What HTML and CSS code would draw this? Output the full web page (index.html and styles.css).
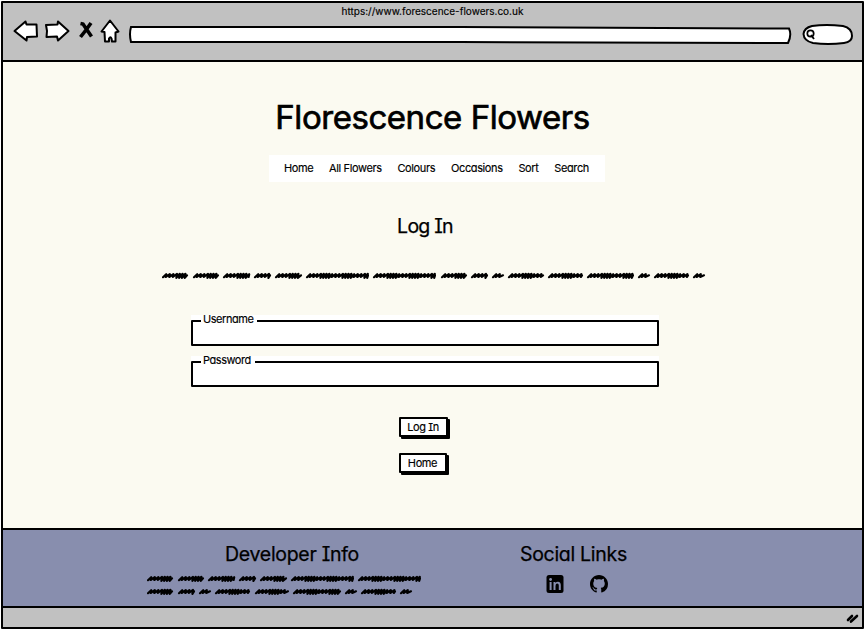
FILE: index.html
```html
<!DOCTYPE html>
<html lang="en">
<head>
<meta charset="utf-8">
<title>Florescence Flowers</title>
<link rel="stylesheet" href="styles.css">
</head>
<body>
<div class="window">
  <header class="chrome">
    <div class="url">https://www.forescence-flowers.co.uk</div>
    <div class="toolbar">
      <svg class="tools" width="128" height="32" viewBox="0 0 128 32">
        <g fill="#fff" stroke="#000" stroke-width="2" stroke-linejoin="round">
          <path d="M11.500 13 22.500 3.500 23.500 6.500 33.500 6.500 34 18.500 24 19 23.500 22.500Z"/>
          <path d="M43 7 54.500 6.500 55 3.500 65.500 13 55 22.500 54 18.500 43.500 19 44 13Z"/>
          <path d="M107 2.500 98.500 13.500 101.500 14 102 23.500 106 23.500 106 20.500Q107.500 18 108.500 20.500L109 23.500 112.500 23.500 112.500 14.500 115.500 13.500Z"/>
        </g>
        <path d="M77.500 5.500 80 6 88.500 18.500M88 5 83 12 77.500 19" fill="none" stroke="#000" stroke-width="3.600"/>
      </svg>
      <svg class="address" viewBox="0 0 664 22" width="664" height="22"><path d="M3 3Q1 10 3 18L332 18 660 19Q664 11 661 4.500L332 3Z" fill="#fff" stroke="#000" stroke-width="2"/></svg>
      <svg class="find" viewBox="0 0 52 24" width="52" height="24"><path d="M10 3Q24 1 41 3Q50 5 50 13Q50 19 42 20Q26 22 11 20Q2 18 1.500 11Q2 5 10 3Z" fill="#fff" stroke="#000" stroke-width="2"/><circle cx="8.500" cy="10.500" r="3.200" fill="none" stroke="#000" stroke-width="1.700"/><path d="m9 12 3 4" stroke="#000" stroke-width="1.800"/></svg>
    </div>
  </header>
  <main>
    <h1>Florescence Flowers</h1>
    <nav><a>Home</a><a>All Flowers</a><a>Colours</a><a>Occasions</a><a>Sort</a><a>Search</a></nav>
    <h2 class="login-title">Log In</h2>
    <svg class="scribble intro" width="546" height="8" data-words="0-26,31-57,61-88,92-109,113-140,144-207,211-274,279-305,309-326,330-342,346-382,386-421,425-472,476-488,492-527,531-543"></svg>
    <form>
      <div class="field"><fieldset><legend>Username</legend></fieldset></div>
      <div class="field"><fieldset><legend>Password</legend></fieldset></div>
      <button class="wide" type="button">Log In</button>
      <button type="button">Home</button>
    </form>
  </main>
  <footer>
    <section class="developer">
      <h2>Developer Info</h2>
      <svg class="scribble" width="276" height="8" data-words="0-26,31-57,61-88,92-109,113-140,144-207,211-274"></svg>
      <svg class="scribble" width="276" height="8" data-words="0-26,31-48,52-64,68-103,108-142,146-194,198-210,214-249,253-265"></svg>
    </section>
    <section class="social">
      <h2>Social Links</h2>
      <div class="icons">
        <svg width="18" height="18" viewBox="0 0 18 18"><rect x=".5" width="17" height="18" rx="2.500"/><g fill="#888eae"><circle cx="4.600" cy="4.500" r="1.400"/><path d="M3.600 7h2v8h-2zM7.500 7h1.900v1.100Q10.300 6.800 12 6.800 14.800 6.800 14.800 10.300V15h-2v-4.400Q12.800 8.600 11.300 8.600 9.500 8.600 9.500 10.900V15h-2Z"/></g></svg>
        <svg width="18" height="18" viewBox="0 0 16 16"><path d="M8 0C3.580 0 0 3.580 0 8c0 3.540 2.290 6.530 5.470 7.590.4.070.55-.17.55-.38 0-.19-.01-.82-.01-1.490-2.010.37-2.530-.49-2.690-.94-.09-.23-.48-.94-.82-1.130-.28-.15-.68-.52-.01-.53.63-.01 1.080.58 1.230.82.72 1.210 1.870.87 2.330.66.07-.52.28-.87.51-1.070-1.780-.2-3.640-.89-3.640-3.950 0-.87.31-1.590.82-2.150-.08-.2-.36-1.020.08-2.120 0 0 .67-.21 2.200.82.64-.18 1.320-.27 2-.27s1.360.09 2 .27c1.530-1.040 2.200-.82 2.200-.82.44 1.100.16 1.920.08 2.120.51.56.82 1.270.82 2.150 0 3.070-1.870 3.750-3.650 3.950.29.25.54.73.54 1.480 0 1.070-.01 1.930-.01 2.200 0 .21.15.46.55.38A8 8 0 0 0 16 8c0-4.420-3.580-8-8-8Z"/></svg>
      </div>
    </section>
  </footer>
  <div class="status"><svg width="14" height="12" viewBox="0 0 14 12"><path d="m2 8 4-4M5 9.500l6-5.500" stroke="#000" stroke-width="2.600" stroke-linecap="round"/></svg></div>
</div>
<script src="scribble.js"></script>
</body>
</html>
```
FILE: styles.css
```css
* { box-sizing: border-box; }
body {
  margin: 0;
  background: #fff;
  color: #000;
  font-family: Inter, "Liberation Sans", sans-serif;
  font-feature-settings: "cv11", "cv08";
  font-size: 11px;
  line-height: 14px;
  letter-spacing: -.38px;
  -webkit-text-stroke: .15px #000;
}
h1, h2 { margin: 0; font-weight: 400; }
.window {
  width: 863px;
  height: 628px;
  margin: 1px 0 0 1px;
  border: 2px solid #000;
  border-radius: 1px;
  display: grid;
  grid-template-rows: 59px 466px 80px 1fr;
}
.chrome { background: #c1c1c1; border-bottom: 2px solid #000; }
.url { height: 15px; padding-top: 1px; text-align: center; font-size: 10px; letter-spacing: 0; }
.toolbar { display: flex; align-items: flex-start; }
.tools { flex: none; margin-right: -3px; }
.address { flex: none; margin: 6px 10px 0 0; }
.find { flex: none; margin-top: 5px; }
main { background: #fbfaf1; display: flex; flex-direction: column; align-items: center; }
h1 { margin-top: 35px; font-size: 33px; line-height: 40px; letter-spacing: -.45px; -webkit-text-stroke: .7px #000; }
nav { display: flex; gap: 15.800px; margin: 18px 0 0 9px; width: 336px; height: 27px; padding: 6px 15px; background: #fff; white-space: nowrap; }
.login-title { margin: 31px 15px 0 0; }
h2 { font-size: 19.500px; line-height: 26px; letter-spacing: -.3px; -webkit-text-stroke: .25px #000; }
.login-title { letter-spacing: -.75px; }
.scribble { display: block; fill: none; stroke: #000; stroke-width: 2.2; stroke-linejoin: round; stroke-linecap: round; }
.intro { margin: 33px 0 0 4px; flex: none; }
form { display: flex; flex-direction: column; align-items: center; width: 468px; margin: 35px 15px 0 0; }
.field { background: #fff; width: 468px; height: 31px; margin-bottom: 10px; }
fieldset { width: 468px; height: 32px; margin: -1px 0 0; padding: 0; border: 2px solid #000; border-radius: 1px; }
legend { margin-left: 8px; padding: 0 4px 3px 2px; line-height: 11px; letter-spacing: -.45px; }
button {
  width: 48px; height: 20px; margin: 0 5px 16px 0; padding: 0;
  border: 2px solid #000; border-radius: 1px; background: #fff; color: #000;
  box-shadow: 2px 2px 0 #000; font: inherit; font-feature-settings: inherit; letter-spacing: inherit; line-height: 16px;
}
button.wide { width: 49px; margin: 20px 4px 16px 0; }
footer { background: #888eae; border-top: 2px solid #000; border-bottom: 2px solid #000; display: flex; }
.developer { margin-left: 144px; width: 290px; padding-top: 11px; }
.developer h2 { text-align: center; margin-bottom: 8px; }
.developer .scribble + .scribble { margin-top: 5px; }
.social { width: 108px; margin-left: 83px; padding-top: 11px; white-space: nowrap; }
.icons { display: flex; justify-content: space-between; margin: 8px 20px 0 26px; }
.icons svg { display: block; }
.status { background: #c1c1c1; display: flex; justify-content: flex-end; padding: 4px 2px 0 0; }
```
FILE: scribble.js
```js
// Draws each word of placeholder copy as a run of tight pen strokes.
document.querySelectorAll('.scribble').forEach(function (svg) {
  svg.dataset.words.split(',').forEach(function (word) {
    var range = word.split('-').map(Number);
    var x = range[0] + 1, end = range[1] - 1, i = 0;
    var d = 'M' + x + ' 5.2';
    while (x < end - 3) {
      var dense = i % 7 > 2;
      d += 'L' + (x + 3.2) + ' ' + (dense ? 1.8 : 2.2) + 'L' + (x + 2.6) + ' ' + (dense ? 5.8 : 5);
      x += dense ? 2.8 : 3.6;
      i++;
    }
    d += 'L' + end + ' 3.3';
    var path = document.createElementNS('http://www.w3.org/2000/svg', 'path');
    path.setAttribute('d', d);
    svg.appendChild(path);
  });
});
```
